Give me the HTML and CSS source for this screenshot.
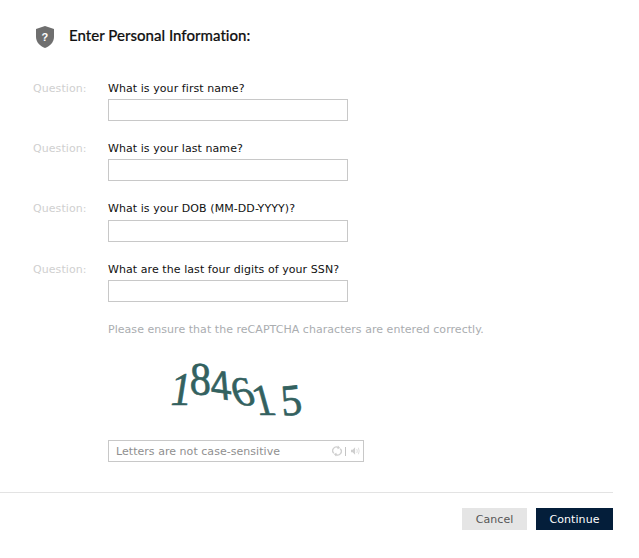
FILE: index.html
```html
<!DOCTYPE html>
<html lang="en">
<head>
    <meta charset="UTF-8">
    <meta name="viewport" content="width=device-width, initial-scale=1.0">
    <title>Enter Personal Information</title>
    <link rel="stylesheet" href="styles.css">
</head>
<body>
    <div class="container">
        <div class="header">
            <svg class="shield" width="18" height="22" viewBox="0 0 18 22">
                <path d="M9 0 L18 3 V11 C18 16 14 20 9 22 C4 20 0 16 0 11 V3 Z" fill="#6f6f6f"/>
                <text x="9" y="15" text-anchor="middle" class="shield-mark">?</text>
            </svg>
            <h2>Enter Personal Information:</h2>
        </div>

        <form class="questions">
            <div class="form-group">
                <span class="tag">Question:</span>
                <div class="field">
                    <label for="first">What is your first name?</label>
                    <input type="text" id="first">
                </div>
            </div>
            <div class="form-group">
                <span class="tag">Question:</span>
                <div class="field">
                    <label for="last">What is your last name?</label>
                    <input type="text" id="last">
                </div>
            </div>
            <div class="form-group">
                <span class="tag">Question:</span>
                <div class="field">
                    <label for="dob">What is your DOB (MM-DD-YYYY)?</label>
                    <input type="text" id="dob">
                </div>
            </div>
            <div class="form-group">
                <span class="tag">Question:</span>
                <div class="field">
                    <label for="ssn">What are the last four digits of your SSN?</label>
                    <input type="text" id="ssn">
                </div>
            </div>
        </form>

        <div class="captcha">
            <p class="hint">Please ensure that the reCAPTCHA characters are entered correctly.</p>
            <div class="digits">
                <span class="d1">1</span><span class="d2">8</span><span class="d3">4</span><span class="d4">6</span><span class="d5">1</span><span class="d6">5</span>
            </div>
            <div class="captcha-input">
                <span>Letters are not case-sensitive</span>
                <div class="captcha-tools">
                    <svg width="10" height="12" viewBox="0 0 11 12">
                        <path d="M2 8.5 A4 4 0 0 1 7 2.3 M9 3.5 A4 4 0 0 1 4 9.7" fill="none" stroke="#cfcfcf" stroke-width="1.5"/>
                        <path d="M6.5 0 L9 2.6 L6 4 Z M4.5 12 L2 9.4 L5 8 Z" fill="#cfcfcf"/>
                    </svg>
                    <i class="divider"></i>
                    <svg width="9" height="10" viewBox="0 0 11 11">
                        <path d="M0 4 H2 L5 1 V10 L2 7 H0 Z" fill="#cfcfcf"/>
                        <path d="M7 3 Q8.5 5.5 7 8 M9 1.5 Q11 5.5 9 9.5" fill="none" stroke="#d8d8d8" stroke-width="1"/>
                    </svg>
                </div>
            </div>
        </div>

        <div class="footer">
            <button type="button" class="btn-cancel">Cancel</button>
            <button type="button" class="btn-continue">Continue</button>
        </div>
    </div>
</body>
</html>
```

FILE: styles.css
```css
body {
    margin: 0;
    background-color: #fff;
    font-family: "DejaVu Sans", sans-serif;
    font-size: 11px;
    letter-spacing: 0.07px;
}
.container {
    width: 613px;
}
.header {
    display: flex;
    align-items: center;
    gap: 15px;
    padding: 26px 0 0 36px;
    height: 22px;
}
.shield {
    display: block;
}
.shield-mark {
    font-family: "Liberation Sans", sans-serif;
    font-size: 11px;
    font-weight: bold;
    fill: #fff;
}
h2 {
    margin: 0 0 4px;
    font-family: Lato, sans-serif;
    font-size: 15px;
    font-weight: 500;
    letter-spacing: 0.03px;
    color: #111;
    -webkit-text-stroke: 0.2px #111;
}
.questions {
    padding: 32px 0 0 33px;
}
.form-group {
    display: flex;
    height: 60.2px;
}
.tag {
    width: 75px;
    color: #d0d0d0;
    line-height: 18px;
}
.field label {
    display: block;
    color: #111;
    line-height: 18px;
    margin-bottom: 1.2px;
}
.field input {
    display: block;
    width: 240px;
    height: 22px;
    border: 1px solid #c8c8c8;
    box-sizing: border-box;
    padding: 0 7px;
}
.captcha {
    padding: 0 0 0 108px;
    margin-top: -0.5px;
}
.hint {
    margin: 2px 0 0;
    color: #aaadb0;
    line-height: 16px;
    letter-spacing: 0.04px;
}
.digits {
    display: flex;
    height: 97px;
    padding-left: 62.5px;
    font-family: "Liberation Serif", serif;
    font-style: italic;
    font-size: 42px;
    line-height: 48px;
    letter-spacing: 0;
    color: #33615f;
    -webkit-text-stroke: 0.6px #33615f;
}
.digits span {
    display: block;
}
.d1 { transform: translateY(30px) scaleY(1.1); }
.d2 { transform: translateY(20px) rotate(4deg) skewX(12deg) scaleY(1.1); margin-left: 1px; }
.d3 { transform: translateY(24px) rotate(8deg) skewX(22deg); margin-left: 2px; }
.d4 { transform: translateY(29px) rotate(-4deg) skewX(22deg); margin-left: 6px; }
.d5 { transform: translateY(40px) skewX(24deg) scaleY(1.05); margin-left: 0; }
.d6 { transform: translateY(39px) rotate(-6deg) skewX(8deg) scaleY(1.05); margin-left: 2px; }
.captcha-input {
    display: flex;
    align-items: center;
    justify-content: space-between;
    box-sizing: border-box;
    width: 256px;
    height: 22px;
    margin-top: 5px;
    padding: 0 3px 0 7px;
    border: 1px solid #c8c8c8;
    color: #8f8f8f;
    letter-spacing: 0.04px;
}
.captcha-tools {
    display: flex;
    align-items: center;
}
.divider {
    display: block;
    width: 1px;
    height: 9px;
    margin: 0 5px 0 3px;
    background-color: #c4c4c4;
}
.footer {
    display: flex;
    justify-content: flex-end;
    gap: 9px;
    margin-top: 30px;
    padding-top: 15px;
    border-top: 1px solid #e3e3e3;
}
.footer button {
    height: 22px;
    border: none;
    padding: 0;
    font-family: "DejaVu Sans", sans-serif;
    font-size: 11px;
    letter-spacing: 0.07px;
}
.btn-cancel {
    width: 65px;
    background-color: #e5e5e5;
    color: #555;
}
.btn-continue {
    width: 77px;
    background-color: #041e3a;
    color: #fff;
}
```
